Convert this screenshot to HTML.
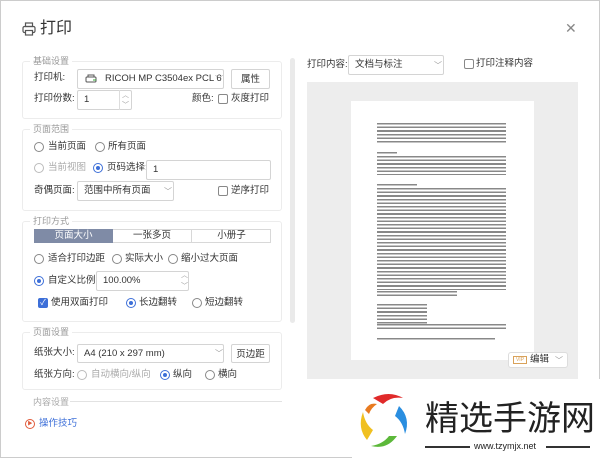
<!DOCTYPE html>
<html><head><meta charset="utf-8"><style>
*{box-sizing:border-box;margin:0;padding:0}
body{width:600px;height:458px;background:#fff;font-family:"Liberation Sans","Noto Sans CJK SC",sans-serif;font-size:9.5px;color:#333;position:relative;overflow:hidden}
.a{position:absolute}
.box{position:absolute;border:1px solid #ececec;border-radius:3px;left:22px;width:260px}
.lg{position:absolute;font-size:9px;color:#999;background:#fff;padding:0 3px;left:30px}
.inp{position:absolute;border:1px solid #d4d4d4;border-radius:2px;background:#fff;padding-left:6px;line-height:18px}
.btn{position:absolute;border:1px solid #d4d4d4;border-radius:2px;text-align:center;line-height:19px;background:#fff}
.r{position:absolute;width:10px;height:10px;border:1px solid #888;border-radius:50%;background:#fff}
.r.on{border-color:#3d6fd8}
.r.on:after{content:"";position:absolute;left:2px;top:2px;width:4px;height:4px;border-radius:50%;background:#3d6fd8}
.r.dis{border-color:#bbb}
.cb{position:absolute;width:10px;height:10px;border:1px solid #888;border-radius:2px;background:#fff}
.t{position:absolute;white-space:nowrap;line-height:12px}
.chev{position:absolute;color:#999;font-size:8px}
.ln{position:absolute;background:repeating-linear-gradient(#888 0 1.6px,transparent 1.6px 3.6px)}
</style></head><body>
<div class="a" style="left:0;top:0;width:600px;height:458px;border:1px solid #ccc"></div>
<svg class="a" style="left:22px;top:22px" width="14" height="14" viewBox="0 0 14 14" fill="none" stroke="#555" stroke-width="1.2"><rect x="3.5" y="1" width="7" height="3.5"/><rect x="1" y="4.5" width="12" height="6" rx="1.5"/><rect x="3.5" y="8.5" width="7" height="4.5" fill="#fff"/></svg>
<div class="t" style="left:40px;top:20px;font-size:16px;line-height:18px;color:#333">打印</div>
<div class="t" style="left:565px;top:22px;font-size:14px;color:#888">✕</div>

<div class="a" style="left:290px;top:58px;width:5px;height:265px;background:#eaeaea;border-radius:3px"></div>

<div class="box" style="top:61px;height:58px"></div>
<div class="lg" style="top:54px">基础设置</div>
<div class="t" style="left:34px;top:72px">打印机:</div>
<div class="inp" style="left:77px;top:69px;width:147px;height:20px;padding-left:27px;line-height:18px">RICOH MP C3504ex PCL 6</div>
<svg class="a" style="left:85px;top:74px" width="12" height="10" viewBox="0 0 12 10" fill="none" stroke="#555"><rect x="1" y="3" width="10" height="5" rx="1"/><rect x="3" y="1" width="6" height="2"/><path d="M8 6h3" stroke="#3a3"/></svg>
<div class="chev" style="left:215px;top:74px">﹀</div>
<div class="btn" style="left:231px;top:69px;width:39px;height:20px">属性</div>
<div class="t" style="left:34px;top:93px">打印份数:</div>
<div class="inp" style="left:77px;top:90px;width:55px;height:20px">1</div>
<div class="a" style="left:119px;top:90px;width:1px;height:20px;background:#ddd"></div>
<div class="chev" style="left:122px;top:90px;font-size:7px">︿</div>
<div class="chev" style="left:122px;top:100px;font-size:7px">﹀</div>
<div class="t" style="left:192px;top:93px">颜色:</div>
<div class="cb" style="left:218px;top:94px"></div>
<div class="t" style="left:231px;top:93px">灰度打印</div>

<div class="box" style="top:129px;height:82px"></div>
<div class="lg" style="top:122px">页面范围</div>
<div class="r" style="left:34px;top:142px"></div><div class="t" style="left:48px;top:141px">当前页面</div>
<div class="r" style="left:95px;top:142px"></div><div class="t" style="left:108px;top:141px">所有页面</div>
<div class="r dis" style="left:34px;top:163px"></div><div class="t" style="left:48px;top:162px;color:#aaa">当前视图</div>
<div class="r on" style="left:93px;top:163px"></div><div class="t" style="left:107px;top:162px">页码选择:</div>
<div class="inp" style="left:146px;top:160px;width:125px;height:20px">1</div>
<div class="t" style="left:34px;top:185px">奇偶页面:</div>
<div class="inp" style="left:77px;top:181px;width:97px;height:20px">范围中所有页面</div>
<div class="chev" style="left:164px;top:186px">﹀</div>
<div class="cb" style="left:218px;top:186px"></div>
<div class="t" style="left:231px;top:185px">逆序打印</div>

<div class="box" style="top:221px;height:101px"></div>
<div class="lg" style="top:214px">打印方式</div>
<div class="a" style="left:34px;top:229px;width:237px;height:14px;border:1px solid #d8d8d8"></div>
<div class="a" style="left:34px;top:229px;width:79px;height:14px;background:#7f8ba6;color:#fff;text-align:center;line-height:14px">页面大小</div>
<div class="a" style="left:113px;top:229px;width:79px;height:14px;border-right:1px solid #d8d8d8;text-align:center;line-height:14px">一张多页</div>
<div class="a" style="left:192px;top:229px;width:79px;height:14px;text-align:center;line-height:14px">小册子</div>
<div class="r" style="left:34px;top:254px"></div><div class="t" style="left:48px;top:253px">适合打印边距</div>
<div class="r" style="left:112px;top:254px"></div><div class="t" style="left:125px;top:253px">实际大小</div>
<div class="r" style="left:168px;top:254px"></div><div class="t" style="left:181px;top:253px">缩小过大页面</div>
<div class="r on" style="left:34px;top:276px"></div><div class="t" style="left:48px;top:275px">自定义比例</div>
<div class="inp" style="left:96px;top:271px;width:93px;height:20px">100.00%</div>
<div class="chev" style="left:181px;top:270px;font-size:7px">︿</div>
<div class="chev" style="left:181px;top:281px;font-size:7px">﹀</div>
<div class="a" style="left:38px;top:298px;width:10px;height:10px;background:#3d6fd8;border-radius:2px;color:#fff;font-size:8px;line-height:10px;text-align:center">✓</div>
<div class="t" style="left:51px;top:297px">使用双面打印</div>
<div class="r on" style="left:126px;top:298px"></div><div class="t" style="left:139px;top:297px">长边翻转</div>
<div class="r" style="left:192px;top:298px"></div><div class="t" style="left:205px;top:297px">短边翻转</div>

<div class="box" style="top:332px;height:58px"></div>
<div class="lg" style="top:325px">页面设置</div>
<div class="t" style="left:34px;top:347px">纸张大小:</div>
<div class="inp" style="left:77px;top:344px;width:147px;height:19px">A4 (210 x 297 mm)</div>
<div class="chev" style="left:215px;top:348px">﹀</div>
<div class="btn" style="left:231px;top:344px;width:39px;height:19px">页边距</div>
<div class="t" style="left:34px;top:369px">纸张方向:</div>
<div class="r dis" style="left:77px;top:370px"></div><div class="t" style="left:91px;top:369px;color:#aaa">自动横向/纵向</div>
<div class="r on" style="left:160px;top:370px"></div><div class="t" style="left:173px;top:369px">纵向</div>
<div class="r" style="left:205px;top:370px"></div><div class="t" style="left:218px;top:369px">横向</div>
<div class="lg" style="top:395px;left:30px;color:#aaa">内容设置</div>
<div class="a" style="left:70px;top:401px;width:212px;height:1px;background:#e2e2e2"></div>
<div class="a" style="left:25px;top:419px;width:10px;height:10px;border:1px solid #e05a3a;border-radius:50%;font-size:5px;color:#e05a3a;text-align:center;line-height:8px">▶</div>
<div class="t" style="left:39px;top:418px;color:#3d6fd8">操作技巧</div>

<div class="t" style="left:307px;top:59px">打印内容:</div>
<div class="inp" style="left:348px;top:55px;width:96px;height:20px">文档与标注</div>
<div class="chev" style="left:434px;top:60px">﹀</div>
<div class="cb" style="left:464px;top:59px"></div>
<div class="t" style="left:476px;top:58px">打印注释内容</div>
<div class="a" style="left:307px;top:82px;width:271px;height:297px;background:#ededed"></div>
<div class="a" style="left:351px;top:101px;width:183px;height:259px;background:#fff"></div>
<div class="ln" style="left:377px;top:123px;width:129px;height:21px"></div>
<div class="ln" style="left:377px;top:152px;width:20px;height:2px"></div>
<div class="ln" style="left:377px;top:156px;width:129px;height:19px"></div>
<div class="ln" style="left:377px;top:184px;width:40px;height:2px"></div>
<div class="ln" style="left:377px;top:188px;width:129px;height:102px"></div>
<div class="ln" style="left:377px;top:291px;width:80px;height:6px"></div>
<div class="ln" style="left:377px;top:304px;width:50px;height:20px"></div>
<div class="ln" style="left:377px;top:324px;width:129px;height:6px"></div>
<div class="ln" style="left:377px;top:338px;width:118px;height:2px"></div>
<div class="a" style="left:508px;top:352px;width:60px;height:16px;background:#fff;border:1px solid #ddd;border-radius:3px"></div>
<div class="a" style="left:513px;top:356px;width:14px;height:8px;border:1px solid #d9a25a;color:#d9a25a;font-size:5px;line-height:6px;text-align:center">VIP</div>
<div class="t" style="left:530px;top:354px">编辑</div>
<div class="chev" style="left:555px;top:355px">﹀</div>

<div class="a" style="left:352px;top:379px;width:248px;height:79px;background:#fff"></div>
<svg class="a" style="left:355px;top:390px" width="60" height="62" viewBox="0 0 60 62">
<path d="M18 8 Q34 0 48 8 Q36 6 28 14Z" fill="#e02a2a"/>
<path d="M44 16 Q56 28 50 44 Q48 32 40 26Z" fill="#2a8ee0"/>
<path d="M42 46 Q32 60 16 56 Q28 54 34 46Z" fill="#5cb83a"/>
<path d="M12 50 Q2 38 8 22 Q10 34 18 40Z" fill="#f0c020"/>
<path d="M10 20 Q14 12 22 14 Q16 18 14 24Z" fill="#e87a20"/>
</svg>
<div class="t" style="left:425px;top:398px;font-size:34px;line-height:36px;color:#222;font-family:'Noto Sans CJK SC',sans-serif">精选手游网</div>
<div class="a" style="left:425px;top:446px;width:45px;height:1.5px;background:#333"></div>
<div class="t" style="left:474px;top:440px;font-size:9px;color:#222">www.tzymjx.net</div>
<div class="a" style="left:546px;top:446px;width:44px;height:1.5px;background:#333"></div>
</body></html>
